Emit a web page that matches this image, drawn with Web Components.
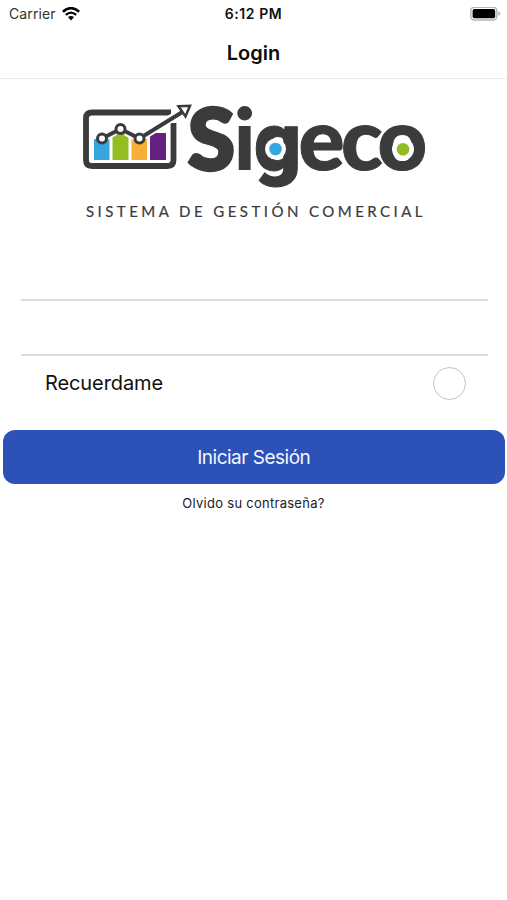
<!DOCTYPE html>
<html lang="es">
<head>
<meta charset="utf-8">
<title>Login</title>
<style>
html,body{margin:0;background:#fff}
body{font-family:Inter,"Liberation Sans",sans-serif;color:#101010}
</style>
</head>
<body>
<login-screen></login-screen>
<script>
function define(name, html){
  const t=document.createElement('template');
  t.innerHTML=html;
  customElements.define(name,class extends HTMLElement{
    constructor(){super();this.attachShadow({mode:'open'}).append(t.content.cloneNode(true));}
  });
}
define('status-bar',`<style>
:host{display:grid;grid-template-columns:1fr auto 1fr;align-items:center;height:27px;padding:0 6px 0 9px;box-sizing:border-box;font-size:14px;line-height:18px}
.l{display:flex;align-items:center;gap:6px;letter-spacing:.12px;color:#333}
.t{font-weight:600;letter-spacing:.55px;color:#111;margin-left:-3px}
svg{display:block}.b{justify-self:end}
</style>
<div class="l"><span>Carrier</span>
<svg width="18" height="14" viewBox="0 0 18 14" fill="none" stroke="#050505"><path d="M.9 4.8Q9-2.5 17.1 4.8" stroke-width="2.6"/><path d="M3.8 7.8Q9 3.4 14.2 7.8" stroke-width="2.2"/><path d="M6 10.1Q9 7.8 12 10.1L9 13.4Z" fill="#050505" stroke="none"/></svg></div>
<span class="t">6:12 PM</span>
<svg class="b" width="31" height="14" viewBox="0 0 31 14"><rect x=".8" y=".3" width="26" height="12.6" rx="3.6" fill="#fff" stroke="#b5b5b5" stroke-width="1.5"/><rect x="2.6" y="2" width="22.6" height="9.2" rx="1.8" fill="#000"/><path d="M28.4 4.1Q32 6.5 28.4 9Z" fill="#aaa"/></svg>`);
define('nav-bar',`<style>
:host{display:flex;align-items:center;justify-content:center;height:52px;box-sizing:border-box;border-bottom:1px solid #ebebeb;font-size:20px;font-weight:600;line-height:24px;color:#0c0c0c}
</style><slot></slot>`);
define('brand-logo',`<style>
:host{display:block;height:151px}svg{display:block}
text{font-family:Lato,"Liberation Sans",sans-serif;fill:#393b3d}
</style>
<svg width="507" height="151" viewBox="0 79 507 151">
<path d="M171 112.500H92Q86 112.500 86 118.500V160Q86 166 92 166H167.500Q173.500 166 173.500 160V123" fill="none" stroke="#393b3d" stroke-width="5.800"/>
<path d="M94 139H109.500V160H94Z" fill="#36a6df"/><path d="M112.500 136L120.500 131L128.500 136V160H112.500Z" fill="#92be22"/><path d="M131.500 137L139.500 140L147 138V160H131.500Z" fill="#fbae35"/><path d="M150 136L155 133H166V160H150Z" fill="#652080"/>
<path d="M102 138.500L115 131.500M126 132L139.500 138.500L183 111" fill="none" stroke="#fff" stroke-width="8"/>
<path d="M102 138.500L120.500 129L139.500 138.500L184 111" fill="none" stroke="#393b3d" stroke-width="4"/>
<g fill="#fff" stroke="#393b3d" stroke-width="3"><circle cx="102" cy="138.500" r="4.500"/><circle cx="120.500" cy="129" r="4.500"/><circle cx="139.500" cy="138.500" r="4.500"/><path d="M178.500 106.300L190 105.800L185.500 116.500Z" stroke-width="2.500"/></g>
<text y="170" font-size="86" font-weight="900" stroke="#393b3d" stroke-width="1"><tspan x="188" font-size="85" stroke-width="3.500">S</tspan><tspan x="233.500" stroke-width="0">i</tspan><tspan x="254" font-family="Roboto" font-size="82">g</tspan><tspan x="298.500 341 377.500">eco</tspan></text>
<circle cx="275.500" cy="149" r="10.500" fill="#fff"/><circle cx="275.500" cy="149" r="6.300" fill="#36a6df"/>
<circle cx="403" cy="149.300" r="11" fill="#fff"/><circle cx="403" cy="149.300" r="6.300" fill="#92be22"/>
<text x="86" y="217" font-size="15" textLength="336.500" stroke="#393b3d" stroke-width=".2">SISTEMA DE GESTIÓN COMERCIAL</text>
</svg>`);
define('line-field',`<style>
:host{display:block;height:55px;box-sizing:border-box;margin:0 19px 0 20.500px;border-bottom:2px solid #dadada}
input{display:block;width:100%;height:100%;box-sizing:border-box;border:0;padding:0 8px;background:none;font:18px Inter,sans-serif;outline:0}
</style><input>`);
define('remember-option',`<style>
:host{display:flex;align-items:center;justify-content:space-between;height:55px;margin:0 41px 0 45px;font-size:20px;line-height:24px;letter-spacing:-.1px}
i{box-sizing:border-box;width:33px;height:33px;border:1.500px solid #c4c4c4;border-radius:50%}
span{margin-top:-1px}
</style><span><slot></slot></span><i></i>`);
define('primary-button',`<style>
:host{display:block;margin:19px 2.500px 0 3px}
button{display:block;width:100%;height:54px;border:0;border-radius:12px;background:#2c52b8;color:#f5f8ff;font:400 19px/24px Inter,sans-serif;letter-spacing:-.5px;padding:1px 0 0}
</style><button><slot></slot></button>`);
define('text-link',`<style>
:host{display:block;text-align:center;margin-top:10px;font-size:13px;line-height:18px;letter-spacing:.27px;color:#222}
</style><slot></slot>`);
define('login-screen',`<style>
:host{display:flex;flex-direction:column;height:900px;background:#fff;overflow:hidden}
line-field{flex:none}.first{height:71px}
</style>
<status-bar></status-bar><nav-bar>Login</nav-bar><brand-logo></brand-logo>
<line-field class="first"></line-field><line-field></line-field>
<remember-option>Recuerdame</remember-option>
<primary-button>Iniciar Sesión</primary-button>
<text-link>Olvido su contraseña?</text-link>`);
</script>
</body>
</html>
